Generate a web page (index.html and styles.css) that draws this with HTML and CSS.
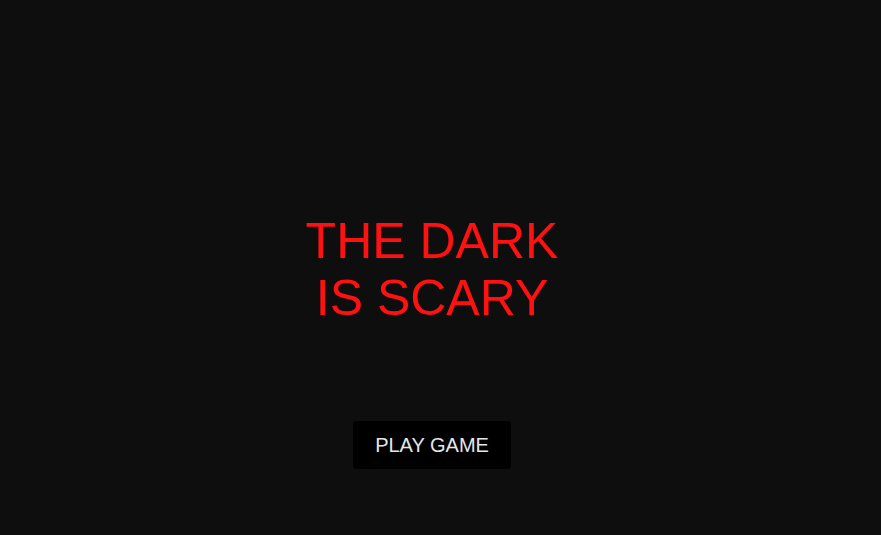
FILE: index.html
```html
<!DOCTYPE html>
<html lang="en">
<head>
  <meta charset="UTF-8">
  <title>The Dark Is Scary</title>
  <link rel="stylesheet" href="styles.css">
</head>
<body>
  <div class="menu">
    <h1 class="title">THE DARK<br>IS SCARY</h1>
    <button class="play">PLAY GAME</button>
  </div>
</body>
</html>
```

FILE: styles.css
```css
html, body { margin: 0; height: 100%; }
body {
  background: #0e0e0e;
  font-family: "Liberation Sans", Arial, sans-serif;
}
.menu {
  height: 100%;
  box-sizing: border-box;
  padding: 213px 17px 0 0;
  display: flex;
  flex-direction: column;
  align-items: center;
}
.title {
  margin: 0;
  color: #ff1111;
  font-size: 50px;
  font-weight: normal;
  line-height: 57px;
  text-align: center;
}
.play {
  margin-top: 94px;
  width: 158px;
  height: 48px;
  border: none;
  border-radius: 3px;
  background: #000;
  color: #e6e6e6;
  font-family: inherit;
  font-size: 20px;
  cursor: pointer;
}
```
